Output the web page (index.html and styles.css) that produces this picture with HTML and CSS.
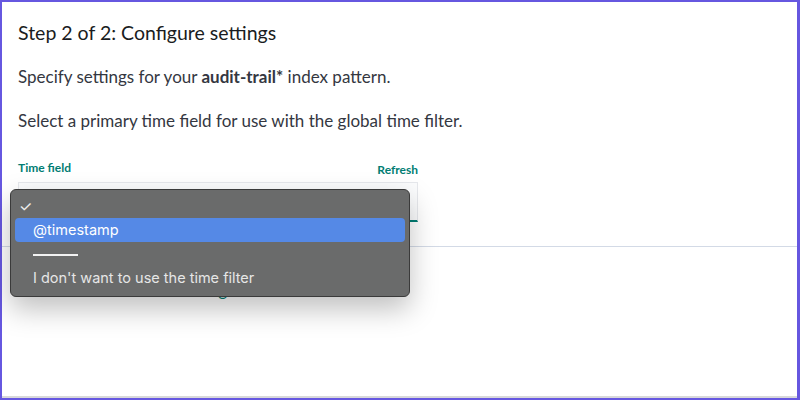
FILE: index.html
```html
<!DOCTYPE html>
<html>
<head>
<meta charset="utf-8">
<link rel="stylesheet" href="styles.css">
</head>
<body>
<div class="frame">
  <div class="page">
    <div class="content">
      <h2 class="title">Step 2 of 2: Configure settings</h2>
      <p class="text">Specify settings for your <b>audit-trail*</b> index pattern.</p>
      <p class="text">Select a primary time field for use with the global time filter.</p>
      <div class="field">
        <div class="labels">
          <span class="label">Time field</span>
          <span class="refresh">Refresh</span>
        </div>
        <div class="select"></div>
      </div>
    </div>
    <div class="rule"></div>
    <div class="advanced">
      <svg class="arrow" width="12" height="12" viewBox="0 0 12 12"><path d="M4 2l4 4-4 4" fill="none" stroke="#017d73" stroke-width="1.5"/></svg>
      <span>Show advanced settings</span>
    </div>
    <div class="menu">
      <div class="item check"><span class="tick">✓</span></div>
      <div class="item active">@timestamp</div>
      <div class="item sep"><span class="line"></span></div>
      <div class="item">I don't want to use the time filter</div>
    </div>
  </div>
  <div class="bottom"></div>
</div>
</body>
</html>
```
FILE: styles.css
```css
html, body {
  margin: 0;
  padding: 0;
}
body {
  width: 800px;
  height: 400px;
  overflow: hidden;
  background: #6657e0;
}
.frame {
  position: relative;
  margin: 2px 3px 0 2px;
  height: 398px;
  display: flex;
  flex-direction: column;
}
.page {
  position: relative;
  flex: 1;
  background: #ffffff;
  font-family: "Lato", "Noto Sans", sans-serif;
  color: #343741;
}
.bottom {
  height: 2px;
  background: #d8d8da;
  margin-bottom: 2px;
}
.content {
  padding: 19px 0 0 16px;
}
.title {
  margin: 0;
  font-size: 19.5px;
  font-weight: 400;
  line-height: 24px;
  color: #1a1c21;
}
.text {
  margin: 20px 0 0 0;
  font-size: 17px;
  line-height: 24px;
}
.text + .text {
  margin-top: 20px;
}
.field {
  width: 400px;
  margin-top: 27px;
}
.labels {
  display: flex;
  justify-content: space-between;
  align-items: flex-end;
  font-size: 12px;
  font-weight: 700;
  color: #017d73;
  line-height: 16px;
}
.refresh {
  position: relative;
  top: 2px;
}
.select {
  margin-top: 6px;
  height: 37px;
  border: 1px solid #e6e8ec;
  border-bottom: 2px solid #017d73;
  background: #fbfcfd;
}
.rule {
  margin-top: 24px;
  height: 1px;
  background: #d3dae6;
}
.advanced {
  display: flex;
  align-items: center;
  gap: 8px;
  padding: 32px 0 0 34px;
  font-size: 17px;
  color: #017d73;
}
.menu {
  position: absolute;
  left: 8px;
  top: 187px;
  width: 400px;
  height: 108px;
  box-sizing: border-box;
  background: #6a6b6b;
  border: 1px solid #3a3a3a;
  border-radius: 6px;
  box-shadow: 0 12px 28px rgba(0,0,0,0.25);
  padding: 5px 4px;
  font-family: "Inter", "Liberation Sans", sans-serif;
  font-size: 14.5px;
  color: #e6e6e6;
}
.item {
  height: 24px;
  line-height: 24px;
  padding-left: 18px;
}
.item.check {
  padding-left: 4px;
  height: 23px;
}
.tick {
  font-size: 15px;
  color: #eeeeee;
}
.item.active {
  background: #5589e6;
  border-radius: 4px;
  color: #ffffff;
}
.item.sep {
  display: flex;
  align-items: center;
}
.line {
  width: 45px;
  height: 2px;
  background: #f2f2f2;
  margin-top: 2px;
}
```
